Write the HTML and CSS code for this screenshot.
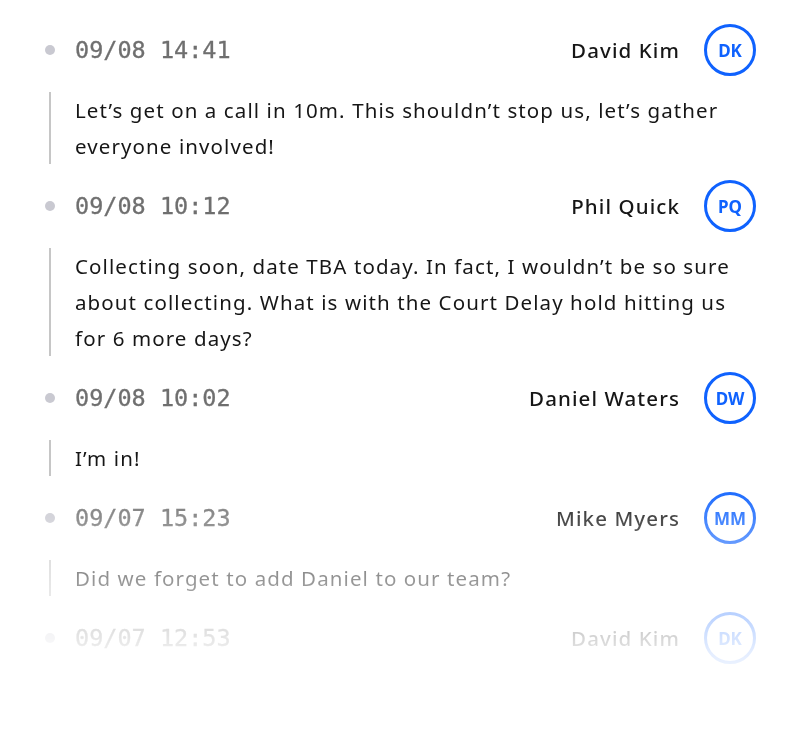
FILE: index.html
```html
<!DOCTYPE html>
<html lang="en">
<head>
<meta charset="utf-8">
<title>Activity feed</title>
<link rel="stylesheet" href="styles.css">
</head>
<body>
<ul class="feed">
  <li class="entry">
    <div class="entry-head"><span class="dot"></span><time class="stamp">09/08 14:41</time><span class="name">David Kim</span><span class="avatar">DK</span></div>
    <p class="entry-body">Let’s get on a call in 10m. This shouldn’t stop us, let’s gather everyone involved!</p>
  </li>
  <li class="entry">
    <div class="entry-head"><span class="dot"></span><time class="stamp">09/08 10:12</time><span class="name">Phil Quick</span><span class="avatar">PQ</span></div>
    <p class="entry-body">Collecting soon, date TBA today. In fact, I wouldn’t be so sure about collecting. What is with the Court Delay hold hitting us for 6 more days?</p>
  </li>
  <li class="entry">
    <div class="entry-head"><span class="dot"></span><time class="stamp">09/08 10:02</time><span class="name">Daniel Waters</span><span class="avatar">DW</span></div>
    <p class="entry-body">I’m in!</p>
  </li>
  <li class="entry">
    <div class="entry-head"><span class="dot"></span><time class="stamp">09/07 15:23</time><span class="name">Mike Myers</span><span class="avatar">MM</span></div>
    <p class="entry-body">Did we forget to add Daniel to our team?</p>
  </li>
  <li class="entry">
    <div class="entry-head"><span class="dot"></span><time class="stamp">09/07 12:53</time><span class="name">David Kim</span><span class="avatar">DK</span></div>
  </li>
</ul>
</body>
</html>
```
FILE: styles.css
```css
html, body {
  margin: 0;
  background: #ffffff;
}
body {
  font-family: "Noto Sans", "Open Sans", sans-serif;
  color: #161616;
}
.feed {
  list-style: none;
  margin: 0;
  padding: 24px 44px 0 45px;
  height: 716px;
  -webkit-mask-image: linear-gradient(to bottom, #000 480px, rgba(0,0,0,0.55) 560px, rgba(0,0,0,0.12) 650px, transparent 700px);
  mask-image: linear-gradient(to bottom, #000 480px, rgba(0,0,0,0.55) 560px, rgba(0,0,0,0.12) 650px, transparent 700px);
}
.entry {
  margin: 0 0 16px;
}
.entry-head {
  display: flex;
  align-items: center;
  height: 52px;
}
.dot {
  width: 10px;
  height: 10px;
  border-radius: 50%;
  background: #c9c9d1;
}
.stamp {
  margin-left: 20px;
  font-family: "DejaVu Sans Mono", "Liberation Mono", monospace;
  font-size: 23.5px;
  color: #6f6f6f;
  -webkit-text-stroke: 0.3px #6f6f6f;
}
.name {
  margin-left: auto;
  font-size: 20.5px;
  font-weight: 500;
  letter-spacing: 1.1px;
  color: #161616;
}
.avatar {
  margin-left: 24px;
  box-sizing: border-box;
  width: 52px;
  height: 52px;
  border: 3px solid #0f62fe;
  border-radius: 50%;
  display: flex;
  align-items: center;
  justify-content: center;
  font-size: 17px;
  font-weight: 700;
  color: #0f62fe;
}
.entry-body {
  margin: 16px 0 0 4px;
  padding-left: 24px;
  border-left: 2px solid #c6c6c6;
  font-size: 20.5px;
  letter-spacing: 1.1px;
  line-height: 36px;
}
```
